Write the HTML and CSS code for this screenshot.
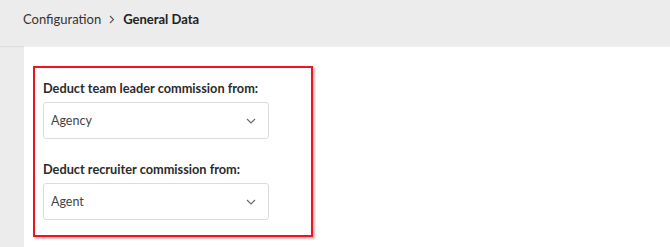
FILE: index.html
```html
<!DOCTYPE html>
<html>
<head>
<meta charset="utf-8">
<link rel="stylesheet" href="styles.css">
</head>
<body>
<header class="topbar">
  <nav class="crumbs">
    <span class="crumb">Configuration</span>
    <svg class="sep" width="6" height="9" viewBox="0 0 6 9"><path d="M1 1l3.5 3.5L1 8" fill="none" stroke="#555" stroke-width="1.1"/></svg>
    <span class="crumb current">General Data</span>
  </nav>
</header>
<main class="content">
  <section class="panel">
    <div class="field">
      <label class="label">Deduct team leader commission from:</label>
      <div class="select"><span>Agency</span>
        <svg class="chev" width="10" height="6" viewBox="0 0 10 6"><path d="M1 1l4 4 4-4" fill="none" stroke="#666" stroke-width="1.1"/></svg>
      </div>
    </div>
    <div class="field">
      <label class="label">Deduct recruiter commission from:</label>
      <div class="select"><span>Agent</span>
        <svg class="chev" width="10" height="6" viewBox="0 0 10 6"><path d="M1 1l4 4 4-4" fill="none" stroke="#666" stroke-width="1.1"/></svg>
      </div>
    </div>
  </section>
</main>
</body>
</html>
```
FILE: styles.css
```css
* { box-sizing: border-box; }
html, body { margin: 0; height: 100%; }
body {
  background: #ececec;
  font-family: Lato, "Noto Sans", sans-serif;
  color: #333;
  display: flex;
  flex-direction: column;
}
.topbar {
  height: 46px;
  flex: none;
  display: flex;
  align-items: center;
  padding-left: 23px;
  box-shadow: 0 1px 1px rgba(0,0,0,0.06);
  position: relative;
  z-index: 1;
}
.crumbs {
  display: flex;
  align-items: center;
  gap: 8px;
  font-size: 13px;
  margin-top: -8px;
}
.crumb { color: #333; }
.crumb.current { font-weight: 700; color: #222; }
.sep { margin: 1px 0 0 0; }
.content {
  flex: 1;
  margin-left: 24px;
  background: #fff;
  padding: 20px 0 0 9px;
}
.panel {
  width: 280px;
  border: 2px solid #ee1520;
  box-shadow: 2px 2px 2px rgba(0,0,0,0.25);
  padding: 10px 8px 15px 8px;
  display: flex;
  flex-direction: column;
  gap: 20px;
}
.field { display: flex; flex-direction: column; gap: 4px; }
.label {
  font-size: 12.75px;
  font-weight: 700;
  line-height: 20px;
  color: #2b2b2b;
}
.select {
  width: 226px;
  height: 37px;
  border: 1px solid #dcdcdc;
  border-radius: 3px;
  display: flex;
  align-items: center;
  justify-content: space-between;
  padding: 0 12px 0 7px;
  font-size: 12.5px;
  color: #444;
}
.chev { margin-top: 1px; }
```
